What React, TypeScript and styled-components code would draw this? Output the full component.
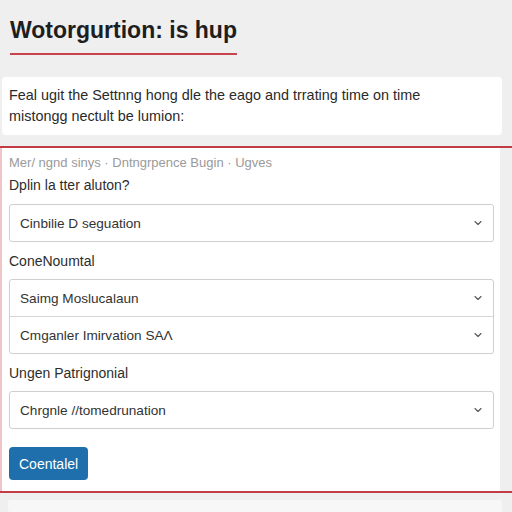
import { createGlobalStyle } from "styled-components";
import styled from "styled-components";
import { ChevronDown } from "lucide-react";

const GlobalStyle = createGlobalStyle`
  html, body {
    margin: 0;
    padding: 0;
    background: #efefef;
    font-family: "Liberation Sans", Arial, sans-serif;
    color: #333;
  }
`;

const Pagina = styled.div`
  width: 512px;
  height: 512px;
  overflow: hidden;
  display: flex;
  flex-direction: column;
`;

const Cabecalho = styled.header`
  padding: 17px 10px 0;
`;

const Titulo = styled.h1`
  display: inline-block;
  margin: 0;
  padding-bottom: 9px;
  font-size: 23px;
  font-weight: 700;
  color: #1e1e1e;
  border-bottom: 2px solid #c8434e;
`;

const CartaoIntro = styled.div`
  margin: 22px 10px 0 2px;
  padding: 8px 7px;
  background: #fff;
  border-radius: 4px;
  font-size: 14.4px;
  line-height: 21px;
  color: #2a2a2a;
`;

const SecaoFormulario = styled.section`
  margin-top: 11px;
  border-top: 2px solid #c23b45;
  border-bottom: 2px solid #c23b45;
`;

const PainelFormulario = styled.div`
  margin-right: 12px;
  padding: 7px 6px 11px 7px;
  background: #fff;
  border-left: 2px solid #f0c5c8;
  display: flex;
  flex-direction: column;
`;

const Trilha = styled.div`
  font-size: 13px;
  line-height: 16px;
  color: #9a9a9a;
`;

const Rotulo = styled.label<{ $topo: number }>`
  margin-top: ${(p) => p.$topo}px;
  font-size: 14px;
  line-height: 18px;
  color: #2d2d2d;
`;

const GrupoSelect = styled.div<{ $topo: number }>`
  margin-top: ${(p) => p.$topo}px;
  display: flex;
  flex-direction: column;
  border: 1px solid #cfcfcf;
  border-radius: 3px;
  & > div + div {
    border-top: 1px solid #d6d6d6;
  }
`;

const Opcao = styled.div`
  height: 36px;
  padding: 0 9px 0 10px;
  display: flex;
  align-items: center;
  justify-content: space-between;
  font-size: 13.6px;
  color: #333;
`;

const Botao = styled.button`
  margin-top: 18px;
  align-self: flex-start;
  height: 33px;
  padding: 0 10px;
  border: none;
  border-radius: 4px;
  background: #1e6fab;
  color: #fff;
  font-family: inherit;
  font-size: 14px;
`;

const Rodape = styled.div`
  margin: 7px 10px 0 8px;
  height: 20px;
  background: #f7f7f7;
  border-radius: 3px;
`;

function CampoSelect({ textos, topo }: { textos: string[]; topo: number }) {
  return (
    <GrupoSelect $topo={topo}>
      {textos.map((t) => (
        <Opcao key={t}>
          <span>{t}</span>
          <ChevronDown size={12} strokeWidth={2.2} color="#555" />
        </Opcao>
      ))}
    </GrupoSelect>
  );
}

export default function App() {
  return (
    <Pagina>
      <GlobalStyle />
      <Cabecalho>
        <Titulo>Wotorgurtion: is hup</Titulo>
      </Cabecalho>
      <CartaoIntro>
        Feal ugit the Settnng hong dle the eago and trrating time on time
        <br />
        mistongg nectult be lumion:
      </CartaoIntro>
      <SecaoFormulario>
        <PainelFormulario>
          <Trilha>Mer/ ngnd sinys · Dntngrpence Bugin · Ugves</Trilha>
          <Rotulo $topo={5}>Dplin la tter aluton?</Rotulo>
          <CampoSelect topo={10} textos={["Cinbilie D seguation"]} />
          <Rotulo $topo={10}>ConeNoumtal</Rotulo>
          <CampoSelect topo={9} textos={["Saimg Moslucalaun", "Cmganler Imirvation SAΛ"]} />
          <Rotulo $topo={10}>Ungen Patrignonial</Rotulo>
          <CampoSelect topo={9} textos={["Chrgnle //tomedrunation"]} />
          <Botao>Coentalel</Botao>
        </PainelFormulario>
      </SecaoFormulario>
      <Rodape />
    </Pagina>
  );
}
